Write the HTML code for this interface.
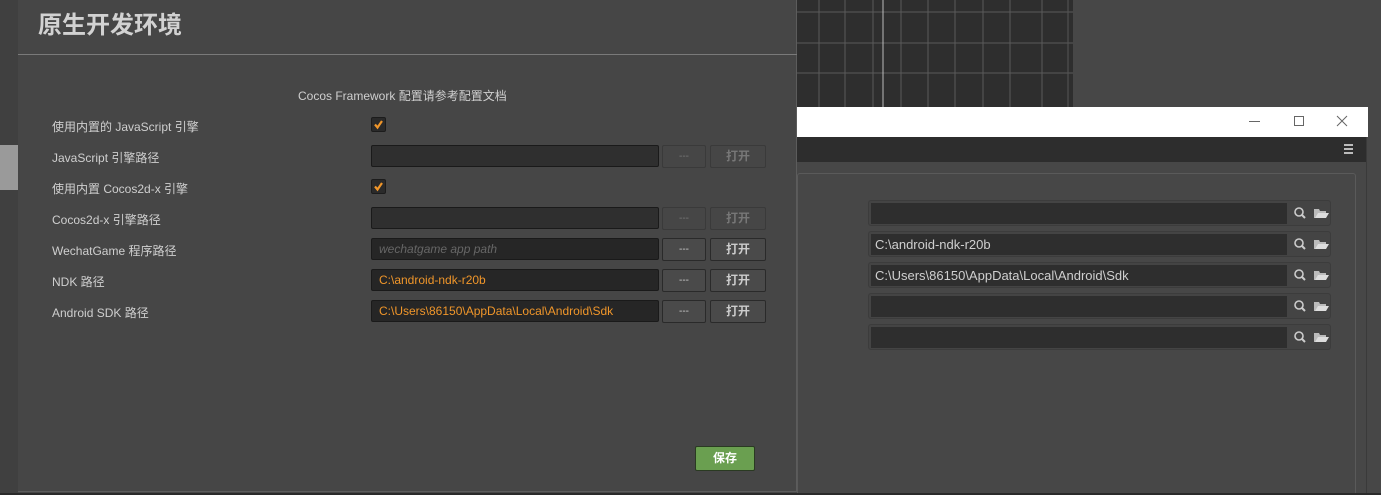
<!DOCTYPE html>
<html><head><meta charset="utf-8"><style>
*{box-sizing:border-box;margin:0;padding:0}
html,body{width:1381px;height:495px;overflow:hidden}
body{background:#474747;position:relative;font-family:"Liberation Sans","Noto Sans CJK SC",sans-serif;color:#d0d0d0;font-size:12px}
.a{position:absolute}
.lbl{position:absolute;left:52px;font-size:12px;color:#cfcfcf}
.inp{position:absolute;left:371px;width:288px;height:22px;background:#262626;border:1px solid #1a1a1a;border-radius:2px;font-size:12px;line-height:20px;padding-left:7px;color:#f0962a}
.b1,.b2{position:absolute;height:23px;border:1px solid #2a2a2a;border-radius:2px;background:#4a4a4a;text-align:center;line-height:21px;color:#ccc;font-size:12px}
.b1{left:662px;width:44px;font-size:10px}.b2{left:710px;width:56px;font-weight:bold}
.dis{color:#777;border-color:#3a3a3a;background:#464646}
.chk{position:absolute;left:371px;width:15px;height:15px;background:#2a2a2a;border:1px solid #1c1c1c;border-radius:2px}
.ri{position:absolute;left:868px;width:463px;height:26px;border:1px solid #3c3c3c;border-radius:3px;background:#444}
.ri div.f{position:absolute;left:2px;top:2px;width:416px;height:21px;background:#2e2e2e;color:#cfcfcf;font-size:13px;line-height:21px;padding-left:4px}
</style></head><body>
<div class="a" style="left:0;top:0;width:18px;height:495px;background:#404040"></div>
<div class="a" style="left:0;top:145px;width:18px;height:45px;background:#9a9a9a"></div>
<svg class="a" style="left:797px;top:0" width="276" height="107">
<rect width="276" height="107" fill="#2e2e2e"/>
<g stroke="#5a5a5a" stroke-width="1">
<line x1="0" y1="12" x2="276" y2="12"/><line x1="0" y1="43" x2="276" y2="43"/><line x1="0" y1="73" x2="276" y2="73"/>
<line x1="22" y1="0" x2="22" y2="107"/><line x1="48" y1="0" x2="48" y2="107"/><line x1="76" y1="0" x2="76" y2="107"/><line x1="104" y1="0" x2="104" y2="107"/><line x1="131" y1="0" x2="131" y2="107"/><line x1="158" y1="0" x2="158" y2="107"/><line x1="186" y1="0" x2="186" y2="107"/><line x1="213" y1="0" x2="213" y2="107"/><line x1="245" y1="0" x2="245" y2="107"/>
</g><line x1="86" y1="0" x2="86" y2="107" stroke="#bbb"/><line x1="271" y1="0" x2="271" y2="107" stroke="#555"/></svg>
<div class="a" style="left:797px;top:107px;width:571px;height:30px;background:#fff"></div>
<div class="a" style="left:1249px;top:121px;width:11px;height:1px;background:#666"></div>
<div class="a" style="left:1294px;top:116px;width:10px;height:10px;border:1px solid #666"></div>
<svg class="a" style="left:1336px;top:115px" width="12" height="12"><path d="M1 1L11 11M11 1L1 11" stroke="#666" stroke-width="1"/></svg>
<div class="a" style="left:797px;top:137px;width:569px;height:25px;background:#2d2d2d"></div>
<div class="a" style="left:1344px;top:144px;width:9px;height:10px;border-top:2px solid #bbb;border-bottom:2px solid #bbb"><div style="margin-top:2px;height:2px;background:#bbb"></div></div>
<div class="a" style="left:797px;top:173px;width:559px;height:330px;border:1px solid #5a5a5a;border-radius:3px"></div>
<div class="a" style="left:1366px;top:137px;width:1px;height:358px;background:#3a3a3a"></div>
<div class="ri" style="top:200px"><div class="f"></div></div>
<div class="ri" style="top:231px"><div class="f">C:\android-ndk-r20b</div></div>
<div class="ri" style="top:262px"><div class="f">C:\Users\86150\AppData\Local\Android\Sdk</div></div>
<div class="ri" style="top:293px"><div class="f"></div></div>
<div class="ri" style="top:324px"><div class="f"></div></div>
<svg class="a" style="left:1292px;top:200px" width="40" height="150">
<g id="ic"><circle cx="7" cy="12" r="4" fill="none" stroke="#ccc" stroke-width="1.6"/><line x1="10" y1="15" x2="13" y2="18" stroke="#ccc" stroke-width="2"/><path d="M22 9h5l1 2h6v7H22z" fill="#bbb"/><path d="M23 18l3-5h11l-3 5z" fill="#ddd"/></g>
<use href="#ic" y="31"/><use href="#ic" y="62"/><use href="#ic" y="93"/><use href="#ic" y="124"/></svg>
<div class="a" style="left:18px;top:0;width:779px;height:492px;background:#464646;border-right:1px solid #5c5c5c;border-bottom:1px solid #5c5c5c">
<div class="a" style="left:20px;top:10px;font-size:24px;font-weight:bold;color:#d2d2d2;line-height:32px">原生开发环境</div>
<div class="a" style="left:0;top:54px;width:779px;height:1px;background:#7a7a7a"></div>
</div>
<div class="a" style="left:298px;top:87px;font-size:12px;color:#cfcfcf">Cocos Framework 配置请参考配置文档</div>
<div class="lbl" style="top:118px">使用内置的 JavaScript 引擎</div><div class="chk" style="top:117px"><svg width="13" height="13"><path d="M3 6.5L5.5 9.5L10 3" fill="none" stroke="#f0962a" stroke-width="2.2"/></svg></div>
<div class="lbl" style="top:149px">JavaScript 引擎路径</div><div class="inp" style="top:145px;background:#2f2f2f"></div><div class="b1 dis" style="top:145px">---</div><div class="b2 dis" style="top:145px">打开</div>
<div class="lbl" style="top:180px">使用内置 Cocos2d-x 引擎</div><div class="chk" style="top:179px"><svg width="13" height="13"><path d="M3 6.5L5.5 9.5L10 3" fill="none" stroke="#f0962a" stroke-width="2.2"/></svg></div>
<div class="lbl" style="top:211px">Cocos2d-x 引擎路径</div><div class="inp" style="top:207px;background:#2f2f2f"></div><div class="b1 dis" style="top:207px">---</div><div class="b2 dis" style="top:207px">打开</div>
<div class="lbl" style="top:242px">WechatGame 程序路径</div><div class="inp" style="top:238px;color:#666;font-style:italic">wechatgame app path</div><div class="b1" style="top:238px">---</div><div class="b2" style="top:238px">打开</div>
<div class="lbl" style="top:273px">NDK 路径</div><div class="inp" style="top:269px">C:\android-ndk-r20b</div><div class="b1" style="top:269px">---</div><div class="b2" style="top:269px">打开</div>
<div class="lbl" style="top:304px">Android SDK 路径</div><div class="inp" style="top:300px">C:\Users\86150\AppData\Local\Android\Sdk</div><div class="b1" style="top:300px">---</div><div class="b2" style="top:300px">打开</div>
<div class="a" style="left:695px;top:446px;width:60px;height:25px;background:#6a9f50;border:1px solid #2a3a22;border-radius:2px;color:#fff;font-weight:bold;text-align:center;line-height:23px;font-size:12px">保存</div>
<div class="a" style="left:0;top:493px;width:1381px;height:2px;background:#2a2a2a"></div>
</body></html>
